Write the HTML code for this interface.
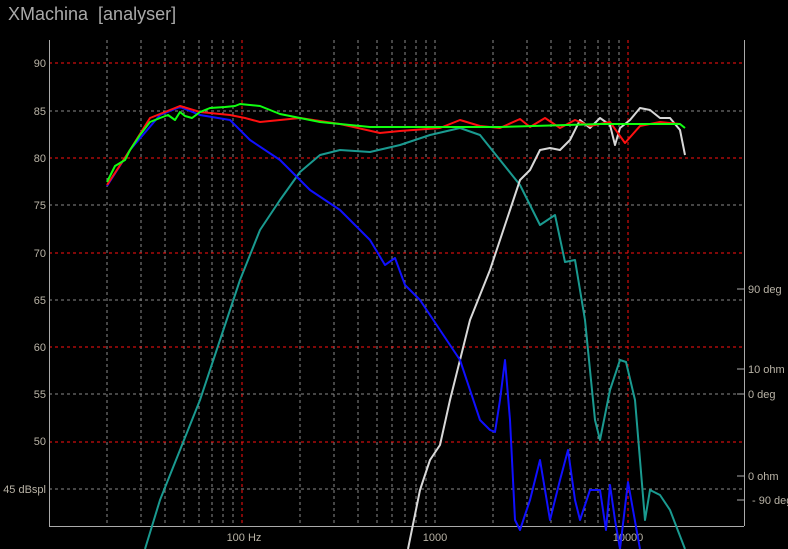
<!DOCTYPE html><html><head><style>body{margin:0;background:#000;width:788px;height:549px;overflow:hidden;font-family:"Liberation Sans",sans-serif}</style></head><body>
<svg width="788" height="549" xmlns="http://www.w3.org/2000/svg" style="position:absolute;left:0;top:0">
<text x="8" y="20" fill="#a9a9a9" font-size="18" xml:space="preserve">XMachina  [analyser]</text>
<g stroke="#8a8a8a" stroke-dasharray="3,3" stroke-width="1" shape-rendering="crispEdges">
<line x1="49" x2="744" y1="111" y2="111"/><line x1="49" x2="744" y1="205" y2="205"/><line x1="49" x2="744" y1="300" y2="300"/><line x1="49" x2="744" y1="394" y2="394"/><line x1="49" x2="744" y1="489" y2="489"/>
<g id="dec"><line x1="107" x2="107" y1="40" y2="526"/><line x1="141" x2="141" y1="40" y2="526"/><line x1="165" x2="165" y1="40" y2="526"/><line x1="184" x2="184" y1="40" y2="526"/><line x1="199" x2="199" y1="40" y2="526"/><line x1="212" x2="212" y1="40" y2="526"/><line x1="223" x2="223" y1="40" y2="526"/><line x1="233" x2="233" y1="40" y2="526"/></g>
<use href="#dec" x="193"/><use href="#dec" x="386"/>
<line x1="435" x2="435" y1="40" y2="526"/>
</g>
<g stroke="#ff1010" stroke-dasharray="3,3" stroke-width="1" shape-rendering="crispEdges">
<line x1="49" x2="744" y1="63" y2="63"/><line x1="49" x2="744" y1="158" y2="158"/><line x1="49" x2="744" y1="253" y2="253"/><line x1="49" x2="744" y1="347" y2="347"/><line x1="49" x2="744" y1="442" y2="442"/>
<line x1="242" x2="242" y1="40" y2="526"/><line x1="628" x2="628" y1="40" y2="526"/>
</g>
<g stroke="#aaa" stroke-width="1" shape-rendering="crispEdges"><line x1="49.5" x2="49.5" y1="40" y2="526"/><line x1="49" x2="744" y1="526.5" y2="526.5"/><line x1="744.5" x2="744.5" y1="40" y2="526"/>
<line x1="737" x2="744" y1="289" y2="289"/><line x1="737" x2="744" y1="369" y2="369"/><line x1="737" x2="744" y1="394" y2="394"/><line x1="737" x2="744" y1="476" y2="476"/><line x1="737" x2="744" y1="500" y2="500"/></g>
<g fill="#b9b3a6" font-size="11">
<text x="46" y="67" text-anchor="end">90</text><text x="46" y="115" text-anchor="end">85</text><text x="46" y="162" text-anchor="end">80</text><text x="46" y="209" text-anchor="end">75</text><text x="46" y="257" text-anchor="end">70</text><text x="46" y="304" text-anchor="end">65</text><text x="46" y="351" text-anchor="end">60</text><text x="46" y="398" text-anchor="end">55</text><text x="46" y="445" text-anchor="end">50</text><text x="46" y="493" text-anchor="end">45 dBspl</text>
<text x="748" y="293">90 deg</text><text x="748" y="373">10 ohm</text><text x="748" y="398">0 deg</text><text x="748" y="480">0 ohm</text><text x="752" y="504">- 90 deg</text>
<text x="244" y="541" text-anchor="middle">100 Hz</text><text x="435" y="541" text-anchor="middle">1000</text><text x="628" y="541" text-anchor="middle">10000</text>
</g>
<g fill="none" stroke-width="2" stroke-linejoin="round">
<polyline stroke="#1a9a90" points="145,549 160,500 180,450 200,400 220,340 240,280 260,230 280,200 300,172 320,155 340,150 370,152 400,145 430,135 460,128 480,135 500,160 520,185 540,225 555,215 565,262 575,260 585,320 595,420 600,440 610,390 620,360 626,362 635,400 640,460 645,520 650,490 660,495 670,510 685,549"/>
<polyline stroke="#d8d8d8" points="408,549 420,490 430,460 440,445 450,400 470,320 490,270 510,210 520,180 530,170 540,150 550,148 560,150 570,140 580,120 590,128 600,118 610,125 615,145 620,128 630,120 640,108 650,110 660,118 670,118 680,130 685,155"/>
<polyline stroke="#1010ff" points="107,186 130,150 160,115 180,107 200,115 230,120 250,140 280,160 310,190 340,210 370,240 385,265 395,258 405,285 420,300 440,330 460,360 480,420 490,430 495,432 500,400 505,360 510,420 515,520 520,530 530,500 540,460 550,520 560,480 568,450 575,500 580,520 590,490 600,490 606,530 610,485 615,520 620,549 628,482 640,549"/>
<polyline stroke="#ff1010" points="107,185 130,150 150,118 170,110 180,106 200,112 230,115 245,118 260,122 300,118 340,124 380,133 400,131 440,128 460,120 480,126 500,128 520,119 530,127 545,118 560,128 575,120 590,126 610,122 625,143 640,126 660,122 680,124"/>
<polyline stroke="#10ff10" points="107,182 115,166 125,160 130,150 140,135 150,122 160,118 168,115 175,120 180,112 185,116 192,118 200,112 210,108 225,107 235,106 240,104 260,106 280,114 320,122 370,127 400,127 500,127 600,124 680,124 685,128"/>
</g>
</svg></body></html>
